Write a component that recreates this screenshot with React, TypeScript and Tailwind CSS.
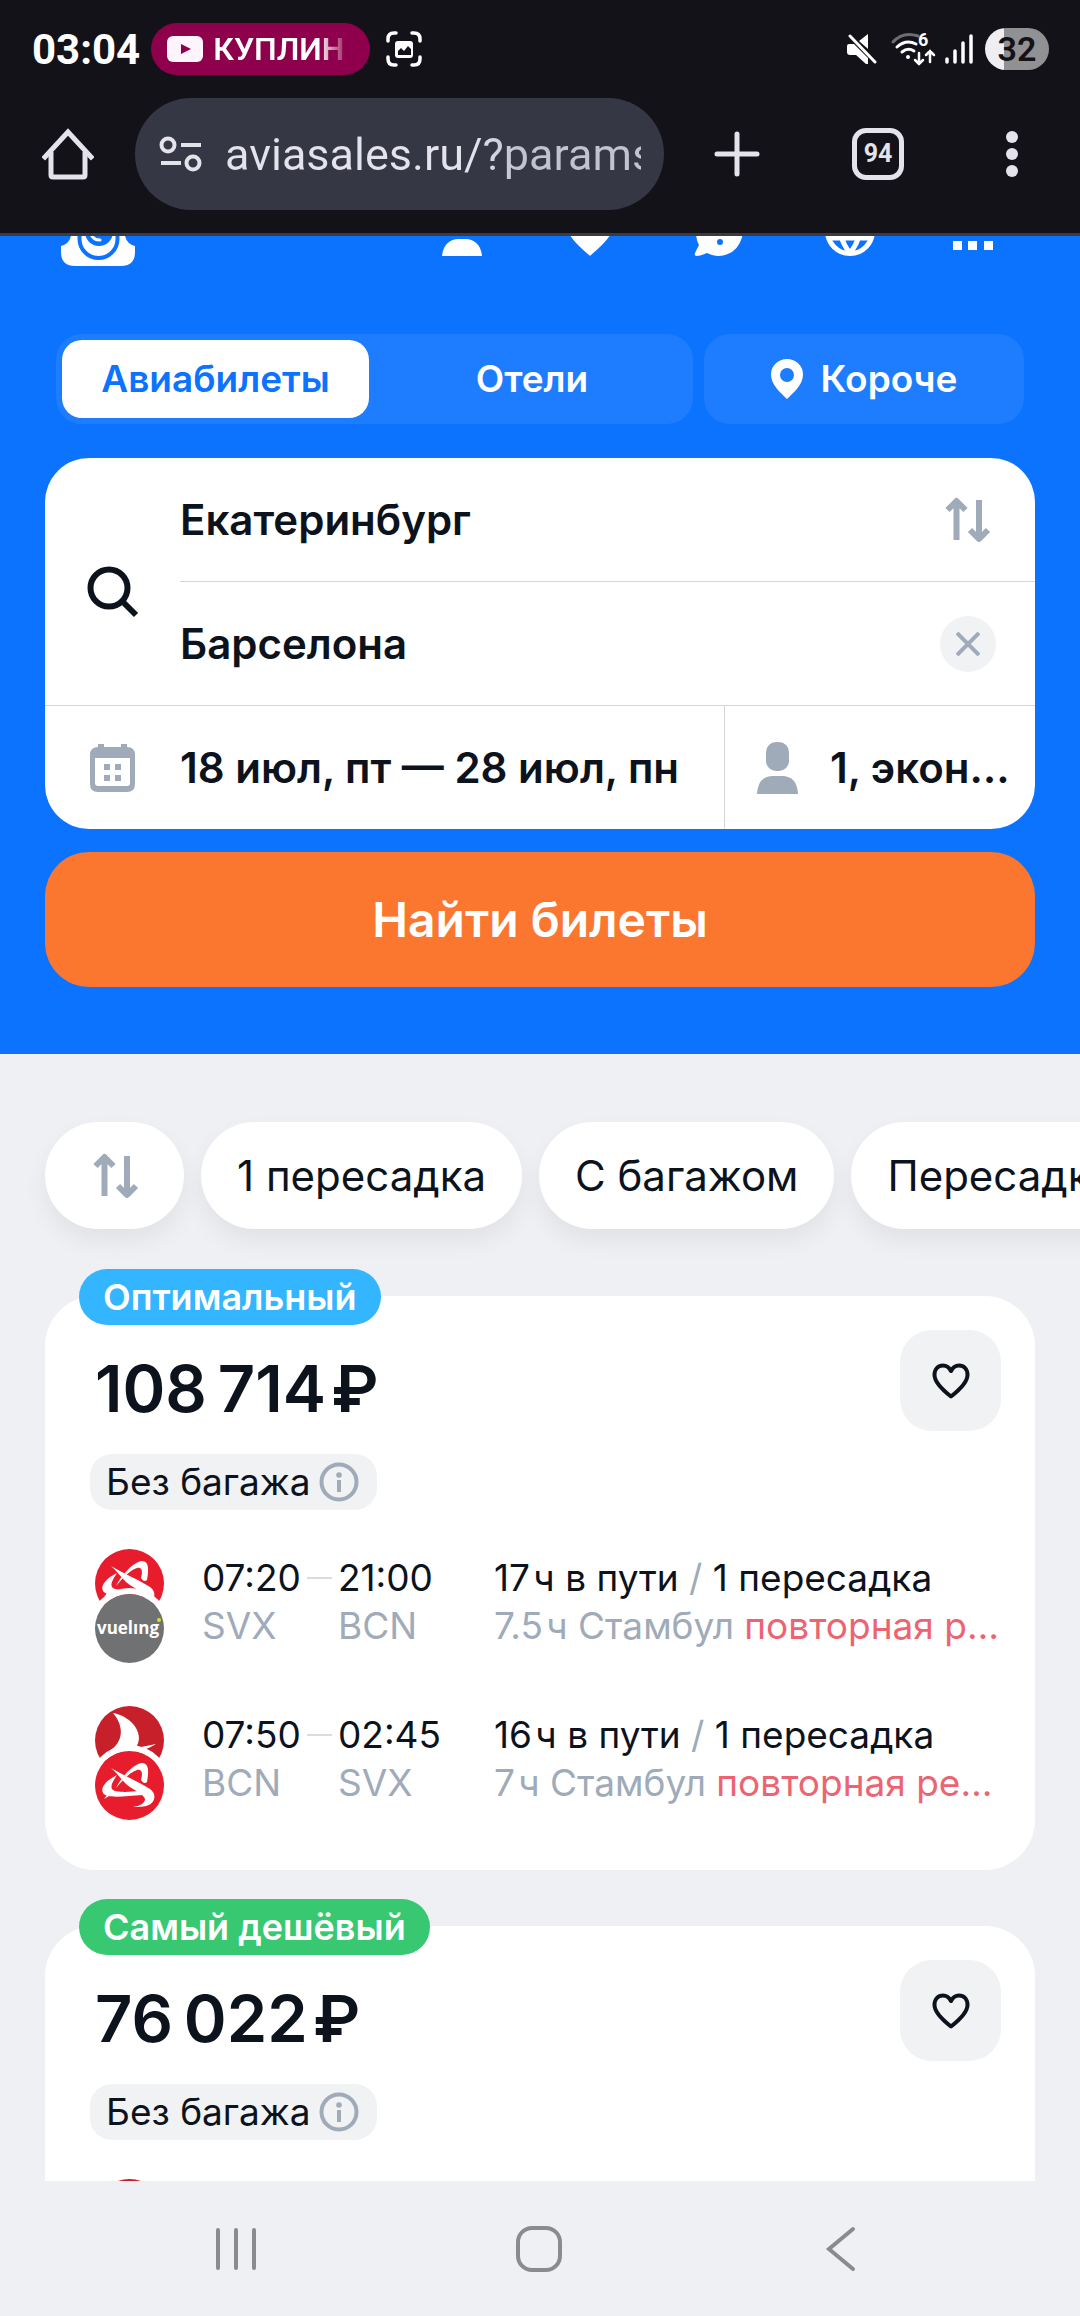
import type { ReactNode } from "react";

type Leg = {
  logos: ReactNode[];
  depart: string;
  arrive: string;
  from: string;
  to: string;
  duration: string;
  stop: string;
};

/* ---------- Airline logos ---------- */

function AjetLogo() {
  return (
    <svg className="size-full" viewBox="0 0 69 69" aria-hidden="true">
      <circle cx="34.5" cy="34.5" r="34.5" fill="#e71d2e" />
      <g fill="#fff">
        <path d="M16 17C28 24 46 32 55 38C62 43 60 51 54 54C49 56 43 56 38 56C45 55 50 52 50 48C49 43 38 39 31 33C26 28 21 21 16 17Z" />
        <path d="M21 37C26 27 36 15 46 12C54 11 54 20 52 31C50 33 48 32 46 29C48 22 47 18 42 19C35 21 28 29 21 37Z" />
        <path d="M22 24C12 29 5 36 8 42C12 48 30 45 48 44L45 40C34 41 20 42 17 38C15 34 19 29 22 24Z" />
        <path d="M12 44L9 48L14 45Z" />
      </g>
    </svg>
  );
}

function TurkishLogo() {
  return (
    <svg className="size-full" viewBox="0 0 69 69" aria-hidden="true">
      <circle cx="34.5" cy="34.5" r="34.5" fill="#c8202b" />
      <path
        d="M18 7C31 9 44 20 44 32C44 36 42 39 41 42L61 38C53 43 46 45 38 46L14 45C28 37 30 21 18 7Z"
        fill="#fff"
      />
    </svg>
  );
}

function VuelingLogo() {
  return (
    <svg className="size-full" viewBox="0 0 69 69" role="img" aria-label="vueling">
      <circle cx="34.5" cy="34.5" r="34.5" fill="#707173" />
      <text x="33" y="40" textAnchor="middle" fontSize="17" fontWeight="700" fill="#fff" fontFamily="'Open Sans', sans-serif">
        vuelıng
      </text>
      <circle cx="64" cy="26" r="2" fill="#d9e021" />
    </svg>
  );
}

/* ---------- Icons ---------- */

function SortIcon() {
  return (
    <svg className="size-12 shrink-0" viewBox="0 0 48 48" fill="none" stroke="#9fabb9" strokeWidth="6" aria-hidden="true">
      <path d="M13.500 44V5M4.500 14L13.500 5L22.500 14" strokeLinejoin="round" />
      <path d="M36 4V43M27 34L36 43L45 34" strokeLinejoin="round" />
    </svg>
  );
}

function HeartIcon() {
  return (
    <svg className="h-9 w-[38px]" viewBox="0 0 38 36" fill="none" stroke="#0d131c" strokeWidth="4" strokeLinejoin="round" aria-hidden="true">
      <path d="M19 8C17 4 14 2.500 11 2.500C6 2.500 2.500 6 2.500 12C2.500 20 12 28 19 33.500C26 28 35.500 20 35.500 12C35.500 6 32 2.500 27 2.500C24 2.500 21 4 19 8Z" />
    </svg>
  );
}

function InfoIcon() {
  return (
    <svg className="size-10 shrink-0" viewBox="0 0 40 40" aria-hidden="true">
      <circle cx="20" cy="20" r="17.500" fill="none" stroke="#9fabb9" strokeWidth="4" />
      <circle cx="20" cy="13" r="2.800" fill="#9fabb9" />
      <rect x="18" y="18" width="4" height="12" fill="#9fabb9" />
    </svg>
  );
}

/* ---------- Phone chrome ---------- */

function StatusBar() {
  return (
    <div className="flex h-[98px] items-center justify-between pl-8 pr-[31px] font-['Roboto',sans-serif]">
      <div className="flex items-center">
        <span className="text-[42px] font-bold text-white">03:04</span>
        <div className="ml-[11px] flex h-[52px] w-[219px] items-center gap-[10px] rounded-full bg-[#8e004c] px-4">
          <svg className="h-[26px] w-9 shrink-0" viewBox="0 0 36 26" aria-hidden="true">
            <rect width="36" height="26" rx="6" fill="#fdf5fb" />
            <path d="M14 8V18L24 13Z" fill="#8e004c" />
          </svg>
          <span className="bg-linear-to-r from-white from-80% to-white/20 bg-clip-text text-[32px] font-semibold whitespace-nowrap text-transparent">
            КУПЛИН
          </span>
        </div>
        <svg className="ml-4 h-9 w-9" viewBox="0 0 36 36" aria-hidden="true">
          <path d="M2 10V8Q2 2 8 2H10M26 2H28Q34 2 34 8V10M34 26V28Q34 34 28 34H26M10 34H8Q2 34 2 28V26" fill="none" stroke="#fff" strokeWidth="3.500" strokeLinecap="round" />
          <rect x="9" y="10" width="18" height="17" rx="3" fill="#fff" />
          <path d="M12 24V20L15 17L18 20L22 15L25 18V24Z" fill="#131218" />
        </svg>
      </div>
      <div className="flex items-center">
        <svg className="h-[30px] w-[30px]" viewBox="0 0 30 30" aria-hidden="true">
          <path d="M2 10H7L21 24V30H19L9 21H3Q0 21 0 18V12Q0 10 2 10ZM12 7L21 0V15Z" fill="#fff" />
          <path d="M3 2L28 28" stroke="#fff" strokeWidth="3" strokeLinecap="round" />
        </svg>
        <svg className="ml-[14px] h-[34px] w-[45px]" viewBox="0 0 45 34" fill="none" strokeLinecap="round" strokeWidth="3" aria-hidden="true">
          <path d="M2 10Q12 -1 27 4" stroke="#6d6d72" />
          <path d="M6 15Q15 7 25 12M11 20Q17 15 23 19" stroke="#fff" />
          <circle cx="17" cy="25" r="2" fill="#fff" />
          <path d="M28 21V32M24 28L28 32L32 28M39 30V19M35 23L39 19L43 23" stroke="#fff" strokeWidth="2.500" />
          <text x="27" y="14" fontSize="18" fontWeight="700" fill="#fff">6</text>
        </svg>
        <svg className="ml-[9px] h-[30px] w-7" viewBox="0 0 28 30" stroke="#fff" strokeWidth="3.500" strokeLinecap="round" aria-hidden="true">
          <path d="M2 25V28M10 17V28M18 9V28M26 2V28" />
        </svg>
        <div className="ml-3 flex h-[42px] w-16 items-center justify-center rounded-full bg-linear-to-r from-[#efeff3] from-30% to-[#919194] to-30% text-[34px] font-semibold text-[#131218]">
          32
        </div>
      </div>
    </div>
  );
}

function BrowserBar() {
  return (
    <div className="flex items-center border-b-[3px] border-[#3b3c40] pb-[23px] pl-[42px] pr-[62px]">
      <button aria-label="Главная страница">
        <svg className="size-[52px]" viewBox="0 0 52 52" fill="none" stroke="#e4e2ea" strokeWidth="5" strokeLinejoin="round" aria-hidden="true">
          <path d="M3 29L26 4L49 29" strokeLinecap="square" strokeLinejoin="miter" />
          <path d="M9 24V47Q9 49 11 49H41Q43 49 43 47V24" />
        </svg>
      </button>
      <div className="ml-[41px] flex h-28 min-w-0 flex-1 items-center rounded-full bg-[#363744] pr-[23px] pl-6">
        <svg className="h-9 w-11 shrink-0" viewBox="0 0 44 36" fill="none" stroke="#e4e2ea" strokeWidth="4" aria-hidden="true">
          <circle cx="9" cy="9" r="6.500" />
          <path d="M22 9H42M2 27H22" />
          <circle cx="34" cy="27" r="6.500" />
        </svg>
        <input
          aria-label="Адресная строка"
          defaultValue="aviasales.ru/?params="
          className="ml-[22px] h-full min-w-0 flex-1 bg-linear-to-r from-[#e4e2ec] from-60% to-[#c2c2d1] to-70% bg-clip-text font-['Roboto',sans-serif] text-[45px] text-transparent outline-none"
        />
      </div>
      <button className="ml-[50px]" aria-label="Новая вкладка">
        <svg className="size-[46px]" viewBox="0 0 46 46" stroke="#e4e2ea" strokeWidth="5" strokeLinecap="round" aria-hidden="true">
          <path d="M23 3V43M3 23H43" />
        </svg>
      </button>
      <button className="ml-[92px] flex size-[52px] items-center justify-center rounded-[14px] border-[5px] border-[#e4e2ea] font-['Roboto',sans-serif] text-[25px] font-bold text-[#e4e2ea]">
        94
      </button>
      <button className="ml-[102px] flex flex-col gap-[5px]" aria-label="Меню">
        <span className="size-3 rounded-full bg-[#e4e2ea]" />
        <span className="size-3 rounded-full bg-[#e4e2ea]" />
        <span className="size-3 rounded-full bg-[#e4e2ea]" />
      </button>
    </div>
  );
}

function SystemNav() {
  return (
    <nav className="flex h-[135px] shrink-0 items-center justify-between bg-[#eff0f4] pr-[216px] pl-[213px]">
      <button aria-label="Недавние">
        <svg className="size-[46px]" viewBox="0 0 46 46" stroke="#8a8b8f" strokeWidth="4" strokeLinecap="round" aria-hidden="true">
          <path d="M5 4V42M23 4V42M41 4V42" />
        </svg>
      </button>
      <button aria-label="Домой">
        <svg className="size-[46px]" viewBox="0 0 46 46" fill="none" stroke="#8a8b8f" strokeWidth="4" aria-hidden="true">
          <rect x="2" y="2" width="42" height="42" rx="14" />
        </svg>
      </button>
      <button aria-label="Назад">
        <svg className="size-[46px]" viewBox="0 0 46 46" fill="none" stroke="#8a8b8f" strokeWidth="4" strokeLinecap="round" aria-hidden="true">
          <path d="M35 3L11 23L35 43" />
        </svg>
      </button>
    </nav>
  );
}

/* ---------- Site ---------- */

function SiteHeader() {
  return (
    <header className="-mt-11 flex h-[74px] items-center justify-between pr-[73px] pl-[61px]">
      <a href="#" aria-label="Авиасейлс">
        <svg className="size-[74px]" viewBox="0 0 74 74" aria-hidden="true">
          <path d="M18 10H56Q64 10 64 18V44Q66 52 74 54V60Q74 74 60 74H14Q0 74 0 60V54Q8 52 10 44V18Q10 10 18 10Z" fill="#fff" />
          <path d="M18.500 38V47A19 19 0 0 0 56.500 47V38" fill="none" stroke="#0c73fe" strokeWidth="4" />
          <circle cx="38" cy="40" r="14" fill="#0c73fe" />
          <path d="M30 42Q32 48 39 48" fill="none" stroke="#fff" strokeWidth="3" strokeLinecap="round" />
        </svg>
      </a>
      <nav className="flex gap-[76px]">
        <a href="#" aria-label="Профиль">
          <svg className="size-[54px]" viewBox="0 0 54 54" fill="#fff" aria-hidden="true">
            <rect x="17" y="4" width="24" height="28" rx="11" />
            <path d="M9 54C10 42 18 37 25 37H33C40 37 48 42 49 54Z" />
          </svg>
        </a>
        <a href="#" aria-label="Избранное">
          <svg className="size-[54px]" viewBox="0 0 54 54" fill="#fff" aria-hidden="true">
            <path d="M27 54C23 50 2 34 2 20C2 4 21 2 27 14C33 2 52 4 52 20C52 34 31 50 27 54Z" />
          </svg>
        </a>
        <a href="#" aria-label="Поддержка">
          <svg className="size-[54px]" viewBox="0 0 54 54" fill="#fff" aria-hidden="true">
            <path d="M27 6A24 24 0 1 1 14 51Q8 54 3 54Q1 53 2 51L6 43Q3 38 3 30A24 24 0 0 1 27 6Z" />
            <circle cx="27" cy="40" r="3" fill="#0c73fe" />
            <path d="M21 24Q22 18 28 19Q34 21 32 26L27 32" fill="none" stroke="#0c73fe" strokeWidth="4" />
          </svg>
        </a>
        <a href="#" aria-label="Язык и валюта">
          <svg className="size-[54px]" viewBox="0 0 54 54" fill="none" stroke="#fff" strokeWidth="5" aria-hidden="true">
            <circle cx="27" cy="29" r="22.500" />
            <path d="M5 22H49M5 36H49M27 7Q9 29 27 51Q45 29 27 7Z" />
          </svg>
        </a>
        <a href="#" aria-label="Ещё">
          <svg className="size-[54px]" viewBox="0 0 54 54" fill="#fff" aria-hidden="true">
            <path d="M0 39H9V48H0ZM15 39H24V48H15ZM31 39H40V48H31Z" />
          </svg>
        </a>
      </nav>
    </header>
  );
}

function ProductTabs() {
  return (
    <div className="mx-14 mt-[68px] flex h-[90px] gap-[11px] text-[37px] font-semibold text-white">
      <div className="grid flex-1 grid-cols-[307px_1fr] rounded-[26px] bg-[#1e7dff] p-[6px]">
        <button className="rounded-[20px] bg-white text-[#0c73fe]">Авиабилеты</button>
        <button className="pl-2">Отели</button>
      </div>
      <button className="flex w-80 items-center justify-center gap-[18px] rounded-[26px] bg-[#1e7dff]">
        <svg className="h-10 w-8" viewBox="0 0 32 40" fill="#fff" aria-hidden="true">
          <path fillRule="evenodd" d="M16 0A16 15.500 0 0 1 32 15.500C32 26 22 34 16 40C10 34 0 26 0 15.500A16 15.500 0 0 1 16 0ZM16 9A7 7 0 1 0 16 23A7 7 0 1 0 16 9Z" />
        </svg>
        Короче
      </button>
    </div>
  );
}

function SearchForm() {
  return (
    <form className="mx-[45px] mt-[34px] pb-[67px]">
      <div className="overflow-hidden rounded-[44px] bg-white text-[42px] font-semibold text-[#0d131c]">
        <div className="flex border-b border-[#d5d7da]">
          <div className="flex w-[135px] shrink-0 items-center pl-[42px]">
            <svg className="mt-5 size-[52px]" viewBox="0 0 52 52" fill="none" stroke="#0d131c" strokeWidth="6" aria-hidden="true">
              <circle cx="22" cy="22" r="18.500" />
              <path d="M35 35L49 49" />
            </svg>
          </div>
          <div className="min-w-0 flex-1">
            <div className="flex h-[124px] items-center border-b border-[#d5d7da] pr-11">
              <input aria-label="Откуда" defaultValue="Екатеринбург" className="min-w-0 flex-1 outline-none" />
              <button type="button" aria-label="Поменять местами">
                <SortIcon />
              </button>
            </div>
            <div className="flex h-[123px] items-center pr-[39px]">
              <input aria-label="Куда" defaultValue="Барселона" className="min-w-0 flex-1 outline-none" />
              <button type="button" aria-label="Очистить" className="flex size-14 items-center justify-center rounded-full bg-[#f0f2f4]">
                <svg className="size-6" viewBox="0 0 24 24" stroke="#9fabb9" strokeWidth="4" aria-hidden="true">
                  <path d="M1 1L23 23M23 1L1 23" />
                </svg>
              </button>
            </div>
          </div>
        </div>
        <div className="flex h-[123px]">
          <button type="button" className="flex flex-1 items-center pl-[45px] text-left whitespace-nowrap">
            <svg className="h-12 w-[45px] shrink-0" viewBox="0 0 45 48" aria-hidden="true">
              <path fillRule="evenodd" d="M8 3V0H14V3H31V0H37V3Q45 3 45 11V40Q45 48 37 48H8Q0 48 0 40V11Q0 3 8 3ZM5 14V39Q5 42 8 42H37Q40 42 40 39V14Z" fill="#9fabb9" />
              <path d="M14 20H20V26H14ZM25 20H31V26H25ZM14 31H20V37H14ZM25 31H31V37H25Z" fill="#9fabb9" />
            </svg>
            <span className="ml-[45px]">18 июл, пт — 28 июл, пн</span>
          </button>
          <button type="button" className="flex w-[311px] items-center border-l border-[#d5d7da] pr-6 pl-8 text-left">
            <svg className="h-[52px] w-[41px] shrink-0" viewBox="0 0 41 52" fill="#9fabb9" aria-hidden="true">
              <rect x="9" y="0" width="23" height="29" rx="10" />
              <path d="M0 52Q1 34 16 34H25Q40 34 41 52Z" />
            </svg>
            <span className="ml-8 truncate">1, эконом</span>
          </button>
        </div>
      </div>
      <button type="button" className="mt-[23px] h-[135px] w-full rounded-[44px] bg-[#fb762e] text-[48px] font-semibold text-white">
        Найти билеты
      </button>
    </form>
  );
}

function Filters() {
  const chips = ["1 пересадка", "С багажом", "Пересадка до 5 часов"];

  return (
    <div className="mt-[68px] flex gap-[17px] pl-[45px] text-[42px] text-[#0d131c]">
      <button aria-label="Сортировка" className="flex h-[107px] w-[139px] shrink-0 items-center justify-center rounded-full bg-white shadow-[0_12px_24px_rgba(0,0,0,0.06)]">
        <SortIcon />
      </button>
      {chips.map((chip) => (
        <button key={chip} className="h-[107px] shrink-0 rounded-full bg-white px-9 whitespace-nowrap shadow-[0_12px_24px_rgba(0,0,0,0.06)]">
          {chip}
        </button>
      ))}
    </div>
  );
}

function LegRow({ leg }: { leg: Leg }) {
  return (
    <div className="flex text-[37px] leading-[48px]">
      <div className="w-[69px] shrink-0">
        <div className="size-[69px]">{leg.logos[0]}</div>
        <div className="relative -mt-6 size-[69px] rounded-full ring-[6px] ring-white">{leg.logos[1]}</div>
      </div>
      <div className="ml-[38px] grid shrink-0 grid-cols-[136px_156px] content-start pt-[5px] text-[#0d131c]">
        <div className="flex items-center">
          {leg.depart}
          <span className="mx-[6px] h-[2px] flex-1 bg-[#dadcdf]" />
        </div>
        <div>{leg.arrive}</div>
        <div className="text-[#9fabb9]">{leg.from}</div>
        <div className="text-[#9fabb9]">{leg.to}</div>
      </div>
      <div className="min-w-0 flex-1 pt-[5px]">
        <p className="truncate text-[#0d131c]">
          {leg.duration} в пути <span className="text-[#9fabb9]">/</span> 1 пересадка
        </p>
        <p className="truncate text-[#ec6472]">
          <span className="text-[#9fabb9]">{leg.stop} Стамбул</span> повторная регистрация
        </p>
      </div>
    </div>
  );
}

function TicketCard({ badge, badgeColor, price, legs }: { badge: string; badgeColor: string; price: string; legs: Leg[] }) {
  return (
    <article className="relative mx-[45px] rounded-[50px] bg-white pt-[34px] pr-[34px] pb-[50px] pl-[50px]">
      <span className={`absolute -top-[27px] left-[34px] flex h-14 items-center rounded-full px-6 text-[36px] font-semibold text-white ${badgeColor}`}>
        {badge}
      </span>
      <div className="flex h-[101px] items-center justify-between">
        <p className="pt-4 text-[65px] font-semibold text-[#0d131c]">{price}</p>
        <button aria-label="В избранное" className="flex size-[101px] items-center justify-center rounded-[32px] bg-[#f1f2f4]">
          <HeartIcon />
        </button>
      </div>
      <button className="-ml-[5px] mt-[23px] flex h-14 items-center gap-2 rounded-[22px] bg-[#f1f2f4] pr-[18px] pl-4 text-[37px] text-[#0d131c]">
        Без багажа
        <InfoIcon />
      </button>
      <div className="mt-[39px] flex flex-col gap-[43px]">
        {legs.map((leg, i) => (
          <LegRow key={i} leg={leg} />
        ))}
      </div>
    </article>
  );
}

const legs: Leg[] = [
  {
    logos: [<AjetLogo />, <VuelingLogo />],
    depart: "07:20",
    arrive: "21:00",
    from: "SVX",
    to: "BCN",
    duration: "17\u200aч",
    stop: "7.5\u200aч",
  },
  {
    logos: [<TurkishLogo />, <AjetLogo />],
    depart: "07:50",
    arrive: "02:45",
    from: "BCN",
    to: "SVX",
    duration: "16\u200aч",
    stop: "7\u200aч",
  },
];

export default function App() {
  return (
    <div className="flex h-screen flex-col overflow-hidden bg-[#eff0f4] font-['Inter',sans-serif]">
      <div className="shrink-0 bg-[#131218]">
        <StatusBar />
        <BrowserBar />
      </div>
      <main className="min-h-0 flex-1 overflow-hidden">
        <section className="flow-root bg-[#0c73fe]">
          <SiteHeader />
          <ProductTabs />
          <SearchForm />
        </section>
        <Filters />
        <div className="mt-[67px] flex flex-col gap-14">
          <TicketCard badge="Оптимальный" badgeColor="bg-[#33b5ff]" price={"108\u2009714\u200a₽"} legs={legs} />
          <TicketCard badge="Самый дешёвый" badgeColor="bg-[#38c871]" price={"76\u2009022\u200a₽"} legs={[legs[1]]} />
        </div>
      </main>
      <SystemNav />
    </div>
  );
}
